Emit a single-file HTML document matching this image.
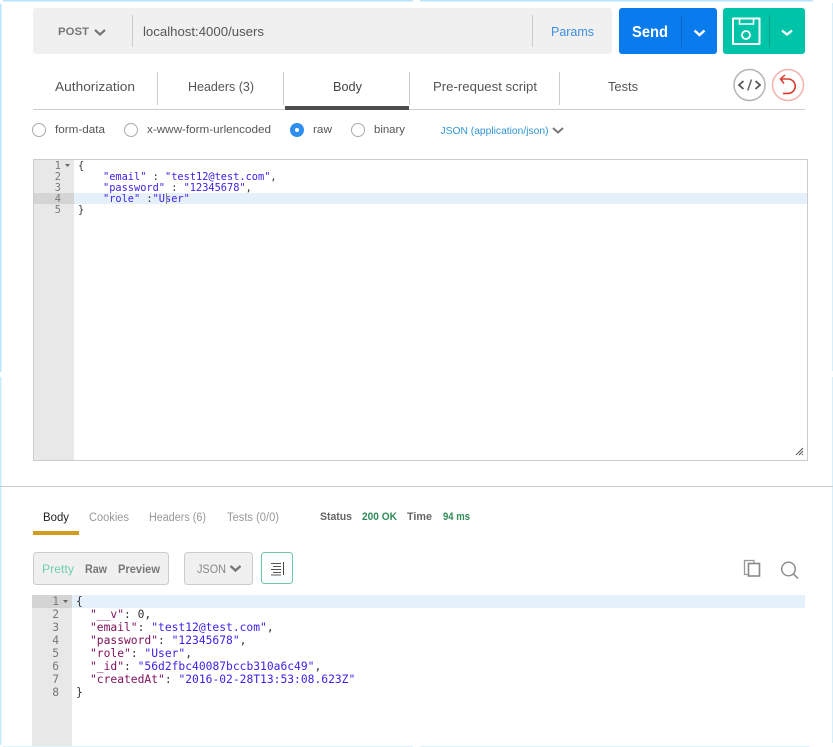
<!DOCTYPE html>
<html><head><meta charset="utf-8"><title>Postman</title>
<style>
html,body{margin:0;padding:0;background:#fff;width:833px;height:747px;overflow:hidden}
svg{display:block}
text{font-family:"Liberation Sans",sans-serif;font-size:12px;fill:#555}
.m text,text.m{font-family:"DejaVu Sans Mono","Liberation Mono",monospace}
.k{fill:#7f0f5a}.s{fill:#3a1fe8}.n{fill:#333}
</style></head><body>
<svg width="833" height="747" viewBox="0 0 833 747" xmlns="http://www.w3.org/2000/svg">
<!-- window edges -->
<rect x="3" y="0" width="410" height="1.500" fill="#b8e6fa"/><rect x="420" y="0" width="393" height="1.500" fill="#b8e6fa"/>
<rect x="0" y="4" width="1.500" height="368" fill="#b8e6fa"/><rect x="0" y="377" width="1.500" height="368" fill="#c8ecfb"/>
<rect x="832" y="3" width="1" height="368" fill="#d5f0fc"/><rect x="832" y="377" width="1" height="366" fill="#d5f0fc"/>
<rect x="3" y="746" width="410" height="1" fill="#def3fb"/><rect x="420" y="746" width="390" height="1" fill="#def3fb"/>

<!-- URL bar -->
<rect x="33" y="8" width="579" height="46" rx="3" fill="#f0f0f0"/>
<text x="58" y="35" textLength="31" lengthAdjust="spacingAndGlyphs" style="font-size:11px;fill:#777;font-weight:bold">POST</text>
<path d="M95 30l5 4.500 5-4.500" fill="none" stroke="#777" stroke-width="2.200"/>
<rect x="132" y="15" width="1" height="32" fill="#ccc"/>
<text x="143" y="36" textLength="121" lengthAdjust="spacingAndGlyphs" style="font-size:13px;fill:#555">localhost:4000/users</text>
<rect x="532" y="15" width="1" height="32" fill="#ccc"/>
<text x="551" y="36" textLength="43" lengthAdjust="spacingAndGlyphs" style="font-size:13px;fill:#3f8fe0">Params</text>

<!-- Send -->
<rect x="619" y="8" width="98" height="46" rx="3" fill="#0a7bec"/>
<rect x="681" y="15" width="1" height="32" fill="#0a64c0"/>
<text x="632" y="37" textLength="36" lengthAdjust="spacingAndGlyphs" style="font-size:16px;font-weight:bold;fill:#fff">Send</text>
<path d="M694.500 30.500l5 4.500 5-4.500" fill="none" stroke="#fff" stroke-width="2.400"/>

<!-- Save -->
<rect x="723" y="8" width="82" height="46" rx="3" fill="#00c4a7"/>
<rect x="769" y="15" width="1" height="32" fill="#04a08a"/>
<path d="M733 18.500h26.500v25.500h-26.500z" fill="none" stroke="#fff" stroke-width="2" stroke-linejoin="round"/>
<path d="M739.500 18.500v5.500h14v-5.500" fill="none" stroke="#fff" stroke-width="1.600"/>
<circle cx="746" cy="35" r="4" fill="none" stroke="#fff" stroke-width="1.800"/>
<path d="M782 30.500l5 4 5-4" fill="none" stroke="#fff" stroke-width="2.400"/>

<!-- Tabs -->
<text x="55" y="91" textLength="80" lengthAdjust="spacingAndGlyphs" style="font-size:13px">Authorization</text>
<rect x="157" y="72" width="1" height="33" fill="#ccc"/>
<text x="188" y="91" textLength="66" lengthAdjust="spacingAndGlyphs" style="font-size:13px">Headers (3)</text>
<rect x="283" y="72" width="1" height="33" fill="#ccc"/>
<text x="333" y="91" textLength="29" lengthAdjust="spacingAndGlyphs" style="font-size:13px;fill:#444">Body</text>
<rect x="409" y="72" width="1" height="33" fill="#ccc"/>
<text x="433" y="91" textLength="104" lengthAdjust="spacingAndGlyphs" style="font-size:13px">Pre-request script</text>
<rect x="559" y="72" width="1" height="33" fill="#ccc"/>
<text x="608" y="91" textLength="30" lengthAdjust="spacingAndGlyphs" style="font-size:13px">Tests</text>
<rect x="33" y="109" width="772" height="1" fill="#ccc"/>
<rect x="285" y="106" width="124" height="4" fill="#4d4d4d"/>

<!-- code / history buttons -->
<circle cx="749.500" cy="85" r="15.500" fill="#fff" stroke="#b5b5b5" stroke-width="1.500"/>
<path d="M743.500 81l-4.500 4 4.500 4M755.500 81l4.500 4-4.500 4" fill="none" stroke="#555" stroke-width="1.800"/>
<path d="M751.500 79.500l-3.800 11" fill="none" stroke="#666" stroke-width="1.500"/>
<circle cx="788" cy="85" r="15.500" fill="#fff" stroke="#f2b3ae" stroke-width="1.500"/>
<path d="M785 75l-4.500 4 3.500 4.500" fill="none" stroke="#d9392c" stroke-width="1.500"/>
<path d="M781 79h7a7.200 7.200 0 0 1 0 14.400h-5" fill="none" stroke="#d9392c" stroke-width="1.600"/>

<!-- radios -->
<circle cx="39" cy="130" r="6.500" fill="#fff" stroke="#aaa"/>
<text x="55" y="133" textLength="50" lengthAdjust="spacingAndGlyphs" style="font-size:11px">form-data</text>
<circle cx="131" cy="130" r="6.500" fill="#fff" stroke="#aaa"/>
<text x="147" y="133" textLength="124" lengthAdjust="spacingAndGlyphs" style="font-size:11px">x-www-form-urlencoded</text>
<circle cx="297" cy="130" r="7" fill="#2f8ff0"/><circle cx="297" cy="130" r="2" fill="#fff"/>
<text x="313" y="133" textLength="19" lengthAdjust="spacingAndGlyphs" style="font-size:11px">raw</text>
<circle cx="358" cy="130" r="6.500" fill="#fff" stroke="#aaa"/>
<text x="374" y="133" textLength="31" lengthAdjust="spacingAndGlyphs" style="font-size:11px">binary</text>
<text x="440.500" y="134" textLength="108" lengthAdjust="spacingAndGlyphs" style="font-size:10.500px;fill:#2f95d6">JSON (application/json)</text>
<path d="M553 128l5 4.500 5-4.500" fill="none" stroke="#777" stroke-width="2"/>

<!-- request editor -->
<rect x="33.500" y="159.500" width="774" height="301" fill="#fff" stroke="#ccc"/>
<rect x="34" y="160" width="40" height="300" fill="#e8e8e8"/>
<rect x="74" y="193" width="733" height="11" fill="#e6f0fb"/>
<rect x="34" y="193" width="40" height="11" fill="#d4d4d4"/>
<g class="m">
<text x="61" y="169" text-anchor="end" style="font-size:10.300px;fill:#777">1</text>
<text x="61" y="180" text-anchor="end" style="font-size:10.300px;fill:#777">2</text>
<text x="61" y="191" text-anchor="end" style="font-size:10.300px;fill:#777">3</text>
<text x="61" y="202" text-anchor="end" style="font-size:10.300px;fill:#777">4</text>
<text x="61" y="213" text-anchor="end" style="font-size:10.300px;fill:#777">5</text>
<path d="M65 164h5l-2.500 3z" fill="#666"/>
<text x="78" y="169" style="font-size:10.300px;fill:#333">{</text>
<text x="103" y="180" xml:space="preserve" style="font-size:10.300px"><tspan class="s">"email"</tspan><tspan class="n"> : </tspan><tspan class="s">"test12@test.com"</tspan><tspan class="n">,</tspan></text>
<text x="103" y="191" xml:space="preserve" style="font-size:10.300px"><tspan class="s">"password"</tspan><tspan class="n"> : </tspan><tspan class="s">"12345678"</tspan><tspan class="n">,</tspan></text>
<text x="103" y="202" xml:space="preserve" style="font-size:10.300px"><tspan class="s">"role"</tspan><tspan class="n"> :</tspan><tspan class="s">"User"</tspan></text>
<text x="78" y="213" style="font-size:10.300px;fill:#333">}</text>
</g>
<rect x="166" y="193" width="1" height="11" fill="#888"/>
<path d="M796 455l7-7M799 455l4-4M802 455l1-1" stroke="#555" stroke-width="1" fill="none"/>

<!-- divider -->
<rect x="0" y="486" width="833" height="1" fill="#ccc"/>

<!-- response tabs -->
<text x="43" y="521" textLength="26" lengthAdjust="spacingAndGlyphs" style="font-size:11.500px;fill:#222">Body</text>
<rect x="33" y="531" width="46" height="4" fill="#d29c1c"/>
<text x="89" y="521" textLength="40" lengthAdjust="spacingAndGlyphs" style="font-size:11.500px;fill:#999">Cookies</text>
<text x="149" y="521" textLength="57" lengthAdjust="spacingAndGlyphs" style="font-size:11.500px;fill:#999">Headers (6)</text>
<text x="227" y="521" textLength="52" lengthAdjust="spacingAndGlyphs" style="font-size:11.500px;fill:#999">Tests (0/0)</text>
<text x="320" y="520" textLength="32" lengthAdjust="spacingAndGlyphs" style="font-size:11px;font-weight:bold;fill:#666">Status</text>
<text x="362" y="520" textLength="35" lengthAdjust="spacingAndGlyphs" style="font-size:11px;font-weight:bold;fill:#2e8b57">200 OK</text>
<text x="407" y="520" textLength="25" lengthAdjust="spacingAndGlyphs" style="font-size:11px;font-weight:bold;fill:#666">Time</text>
<text x="443" y="520" textLength="27" lengthAdjust="spacingAndGlyphs" style="font-size:11px;font-weight:bold;fill:#2e8b57">94 ms</text>

<!-- pretty group -->
<rect x="33.500" y="552.500" width="135" height="32" rx="3" fill="#f0f0f0" stroke="#ccc"/>
<text x="42" y="573" textLength="32" lengthAdjust="spacingAndGlyphs" style="font-size:11.500px;fill:#6fcfb2">Pretty</text>
<text x="85" y="573" textLength="22" lengthAdjust="spacingAndGlyphs" style="font-size:11.500px;font-weight:bold;fill:#777">Raw</text>
<text x="118" y="573" textLength="42" lengthAdjust="spacingAndGlyphs" style="font-size:11.500px;font-weight:bold;fill:#777">Preview</text>
<rect x="184.500" y="552.500" width="68" height="32" rx="3" fill="#f0f0f0" stroke="#ccc"/>
<text x="197" y="573" textLength="29" lengthAdjust="spacingAndGlyphs" style="font-size:11.500px;fill:#888">JSON</text>
<path d="M230.500 566l5 4.500 5-4.500" fill="none" stroke="#777" stroke-width="2.400"/>
<rect x="261.500" y="552.500" width="31" height="31" rx="3" fill="#fff" stroke="#6cc5ac"/>
<path d="M271 563.500h10M273 566.500h8M271 569.500h10M273 572.500h8M271 575h10" stroke="#555" stroke-width="1" fill="none"/>
<path d="M283.500 562v13" stroke="#444" stroke-width="1" fill="none"/>

<!-- copy / search -->
<path d="M744.500 560.500h9.500v14h-9.500z" fill="none" stroke="#999" stroke-width="1.300"/>
<rect x="748.500" y="563.500" width="11" height="12.500" fill="#fff" stroke="#888" stroke-width="1.600"/>
<circle cx="788.500" cy="569" r="6.800" fill="none" stroke="#888" stroke-width="1.400"/>
<path d="M793.500 574l4.500 4.500" stroke="#888" stroke-width="1.500" fill="none"/>

<!-- response editor -->
<rect x="32" y="595" width="40" height="151" fill="#e8e8e8"/>
<rect x="72" y="595" width="733" height="13" fill="#e6f0fb"/>
<rect x="32" y="595" width="40" height="13" fill="#d4d4d4"/>
<g class="m">
<text x="59" y="605" text-anchor="end" style="font-size:11.300px;fill:#777">1</text>
<text x="59" y="618" text-anchor="end" style="font-size:11.300px;fill:#777">2</text>
<text x="59" y="631" text-anchor="end" style="font-size:11.300px;fill:#777">3</text>
<text x="59" y="644" text-anchor="end" style="font-size:11.300px;fill:#777">4</text>
<text x="59" y="657" text-anchor="end" style="font-size:11.300px;fill:#777">5</text>
<text x="59" y="670" text-anchor="end" style="font-size:11.300px;fill:#777">6</text>
<text x="59" y="683" text-anchor="end" style="font-size:11.300px;fill:#777">7</text>
<text x="59" y="696" text-anchor="end" style="font-size:11.300px;fill:#777">8</text>
<path d="M63 600h5l-2.500 3z" fill="#666"/>
<text x="76" y="605" style="font-size:11.300px;fill:#333">{</text>
<text x="90" y="618" xml:space="preserve" style="font-size:11.300px"><tspan class="k">"__v"</tspan><tspan class="n">: 0,</tspan></text>
<text x="90" y="631" xml:space="preserve" style="font-size:11.300px"><tspan class="k">"email"</tspan><tspan class="n">: </tspan><tspan class="s">"test12@test.com"</tspan><tspan class="n">,</tspan></text>
<text x="90" y="644" xml:space="preserve" style="font-size:11.300px"><tspan class="k">"password"</tspan><tspan class="n">: </tspan><tspan class="s">"12345678"</tspan><tspan class="n">,</tspan></text>
<text x="90" y="657" xml:space="preserve" style="font-size:11.300px"><tspan class="k">"role"</tspan><tspan class="n">: </tspan><tspan class="s">"User"</tspan><tspan class="n">,</tspan></text>
<text x="90" y="670" xml:space="preserve" style="font-size:11.300px"><tspan class="k">"_id"</tspan><tspan class="n">: </tspan><tspan class="s">"56d2fbc40087bccb310a6c49"</tspan><tspan class="n">,</tspan></text>
<text x="90" y="683" xml:space="preserve" style="font-size:11.300px"><tspan class="k">"createdAt"</tspan><tspan class="n">: </tspan><tspan class="s">"2016-02-28T13:53:08.623Z"</tspan></text>
<text x="76" y="696" style="font-size:11.300px;fill:#333">}</text>
</g>
</svg>
</body></html>
